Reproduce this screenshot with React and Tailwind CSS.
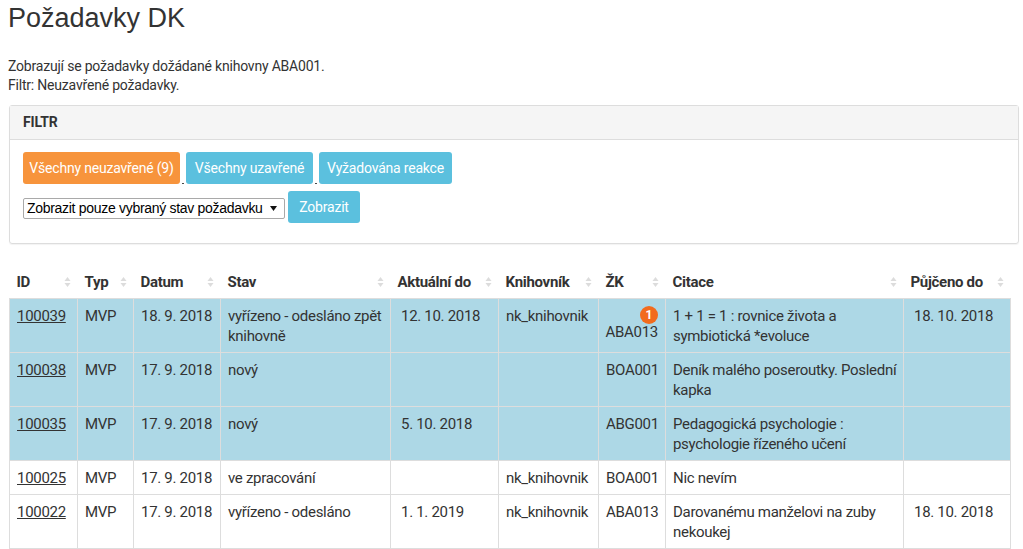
import React from "react";

const cols = [
  { key: "id", label: "ID", w: "w-[68px]" },
  { key: "typ", label: "Typ", w: "w-[56px]" },
  { key: "datum", label: "Datum", w: "w-[87px]" },
  { key: "stav", label: "Stav", w: "w-[170px]" },
  { key: "akt", label: "Aktuální do", w: "w-[108px]" },
  { key: "knih", label: "Knihovník", w: "w-[100px]" },
  { key: "zk", label: "ŽK", w: "w-[67px]" },
  { key: "cit", label: "Citace", w: "w-[238px]" },
  { key: "puj", label: "Půjčeno do", w: "w-[107px]" },
];

const rows = [
  { id: "100039", typ: "MVP", datum: "18. 9. 2018", stav: "vyřízeno - odesláno zpět knihovně", akt: "12. 10. 2018", knih: "nk_knihovnik", zk: "ABA013", badge: 1, cit: "1 + 1 = 1 : rovnice života a symbiotická *evoluce", puj: "18. 10. 2018", hl: true },
  { id: "100038", typ: "MVP", datum: "17. 9. 2018", stav: "nový", akt: "", knih: "", zk: "BOA001", cit: "Deník malého poseroutky. Poslední kapka", puj: "", hl: true },
  { id: "100035", typ: "MVP", datum: "17. 9. 2018", stav: "nový", akt: "5. 10. 2018", knih: "", zk: "ABG001", cit: "Pedagogická psychologie : psychologie řízeného učení", puj: "", hl: true },
  { id: "100025", typ: "MVP", datum: "17. 9. 2018", stav: "ve zpracování", akt: "", knih: "nk_knihovnik", zk: "BOA001", cit: "Nic nevím", puj: "" },
  { id: "100022", typ: "MVP", datum: "17. 9. 2018", stav: "vyřízeno - odesláno", akt: "1. 1. 2019", knih: "nk_knihovnik", zk: "ABA013", cit: "Darovanému manželovi na zuby nekoukej", puj: "18. 10. 2018" },
];

function SortIcon() {
  return (
    <svg width="7" height="12" viewBox="0 0 7 12" className="shrink-0">
      <path d="M3.5 1 L6.5 5 L0.5 5 Z" fill="#dcdcdc" />
      <path d="M3.5 11 L6.5 7 L0.5 7 Z" fill="#dcdcdc" />
    </svg>
  );
}

const td = "border border-[#ddd] pl-[7px] pr-[4px] pt-[7px] pb-[6px] align-top";

export default function App() {
  return (
    <div className="bg-white text-[#333] px-2 font-['Roboto',sans-serif] text-[14px] leading-[19px] tracking-[-0.2px]">
      <h1 className="font-['Liberation_Sans',Arial,sans-serif] text-[27px] leading-[34px] pt-[1px] mb-[22px] tracking-normal">
        Požadavky DK
      </h1>
      <p>Zobrazují se požadavky dožádané knihovny ABA001.</p>
      <p>Filtr: Neuzavřené požadavky.</p>

      {/* Filtr panel */}
      <div className="mt-[10px] ml-[1px] w-[1010px] border border-[#ddd] rounded-[3px] shadow-[0_1px_1px_rgba(0,0,0,0.05)]">
        <div className="bg-[#f5f5f5] border-b border-[#ddd] px-[13px] h-[34px] flex items-center font-bold text-[14px]">
          FILTR
        </div>
        <div className="px-[13px] pt-[12px] pb-[18px]">
          <div className="flex items-end">
            <button className="bg-[#f7943c] text-white rounded-[3px] h-[32px] w-[157px] text-[14px]">
              Všechny neuzavřené (9)
            </button>
            <span className="underline text-[8px] leading-[8px] w-[6px] text-center">&nbsp;</span>
            <button className="bg-[#5bc0de] text-white rounded-[3px] h-[32px] w-[127px] text-[14px]">
              Všechny uzavřené
            </button>
            <span className="underline text-[8px] leading-[8px] w-[6px] text-center">&nbsp;</span>
            <button className="bg-[#5bc0de] text-white rounded-[3px] h-[32px] w-[133px] text-[14px]">
              Vyžadována reakce
            </button>
          </div>
          <div className="flex items-center mt-[7px]">
            <div className="relative">
              <select className="appearance-none h-[21px] w-[262px] border border-[#a9a9a9] rounded-[2px] bg-white text-[14px] leading-[19px] font-['Liberation_Sans',Arial,sans-serif] tracking-[-0.3px] text-black pl-[3px]">
                <option>Zobrazit pouze vybraný stav požadavku</option>
              </select>
              <svg width="7" height="5" viewBox="0 0 7 5" className="absolute right-[8px] top-[8px] pointer-events-none">
                <path d="M0 0 L7 0 L3.5 5 Z" fill="#111" />
              </svg>
            </div>
            <button className="ml-[3px] bg-[#5bc0de] text-white rounded-[3px] h-[32px] w-[72px] text-[14px] mb-[2px]">
              Zobrazit
            </button>
          </div>
        </div>
      </div>

      {/* Tabulka */}
      <table className="mt-[22px] ml-[1px] border-collapse w-[1001px] table-fixed text-[15px] leading-[20px] tracking-[-0.3px]">
        <thead>
          <tr>
            {cols.map((c) => (
              <th key={c.key} className={`${c.w} text-left font-bold pl-[7px] pr-[7px] h-[32px] whitespace-nowrap`}>
                <div className="flex items-center justify-between">
                  <span>{c.label}</span>
                  <SortIcon />
                </div>
              </th>
            ))}
          </tr>
        </thead>
        <tbody>
          {rows.map((r) => (
            <tr key={r.id} className={r.hl ? "bg-[#add8e6]" : "bg-white"}>
              <td className={td}>
                <a href="#" className="underline text-[#333]">{r.id}</a>
              </td>
              <td className={td}>{r.typ}</td>
              <td className={td}>{r.datum}</td>
              <td className={td}>{r.stav}</td>
              <td className={`${td} !pl-[10px]`}>{r.akt}</td>
              <td className={td}>{r.knih}</td>
              <td className={`${td} text-right !pr-[7px]`}>
                {r.badge ? (
                  <div className="flex flex-col items-end">
                    <span className="w-[18px] h-[18px] rounded-full bg-[#f26b1d] text-white text-[12px] leading-[18px] text-center font-bold tracking-normal">
                      {r.badge}
                    </span>
                    <span className="-mt-[2px]">{r.zk}</span>
                  </div>
                ) : (
                  r.zk
                )}
              </td>
              <td className={td}>{r.cit}</td>
              <td className={`${td} !pl-[10px]`}>{r.puj}</td>
            </tr>
          ))}
        </tbody>
      </table>
    </div>
  );
}
